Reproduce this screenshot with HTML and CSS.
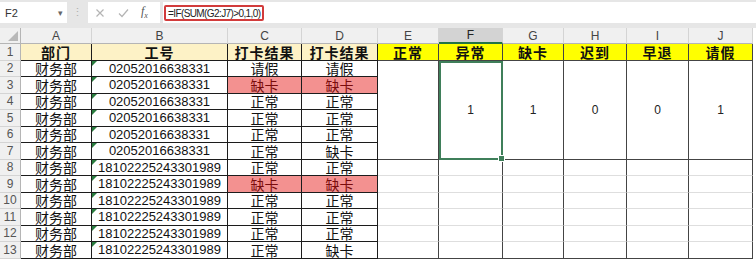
FILE: index.html
```html
<!DOCTYPE html>
<html>
<head>
  <meta charset="UTF-8">
  <title>考勤统计</title>
  <link rel="stylesheet" href="styles.css">
</head>
<body>
  <div class="toolbar">
    <div class="namebox">
      <span class="ref">F2</span>
      <span class="drop">&#9662;</span>
    </div>
    <div class="grip">&#8942;</div>
    <div class="fnbox">
      <svg class="ico ico-x" width="10" height="10" viewBox="0 0 10 10">
        <path d="M1.5 1.5 L8.5 8.5 M8.5 1.5 L1.5 8.5" stroke="#b4b4b4" stroke-width="1.2" fill="none"/>
      </svg>
      <svg class="ico ico-ok" width="11" height="10" viewBox="0 0 11 10">
        <path d="M1 5.5 L4 8.5 L10 1.5" stroke="#b4b4b4" stroke-width="1.2" fill="none"/>
      </svg>
      <span class="fx">f<sub>x</sub></span>
    </div>
    <div class="formula">
      <span class="formula-text">=IF(SUM(G2:J7)&gt;0,1,0)</span>
    </div>
  </div>

  <div class="sheet">
    <!-- column headers -->
    <div class="c corner"></div>
    <div class="c ch">A</div>
    <div class="c ch">B</div>
    <div class="c ch">C</div>
    <div class="c ch">D</div>
    <div class="c ch">E</div>
    <div class="c ch sel-col">F</div>
    <div class="c ch">G</div>
    <div class="c ch">H</div>
    <div class="c ch">I</div>
    <div class="c ch">J</div>

    <!-- row 1 -->
    <div class="c rh">1</div>
    <div class="c d t1">部门</div>
    <div class="c d t1">工号</div>
    <div class="c d t1">打卡结果</div>
    <div class="c d t1">打卡结果</div>
    <div class="c t2">正常</div>
    <div class="c t2">异常</div>
    <div class="c t2">缺卡</div>
    <div class="c t2">迟到</div>
    <div class="c t2">早退</div>
    <div class="c t2">请假</div>

    <!-- row 2 -->
    <div class="c rh">2</div>
    <div class="c d">财务部</div>
    <div class="c d num">02052016638331</div>
    <div class="c d">请假</div>
    <div class="c d">请假</div>
    <div class="c m"></div>
    <div class="c m sel">1</div>
    <div class="c m">1</div>
    <div class="c m">0</div>
    <div class="c m">0</div>
    <div class="c m">1</div>

    <!-- rows 3-7 -->
    <div class="c rh">3</div>
    <div class="c d">财务部</div>
    <div class="c d num">02052016638331</div>
    <div class="c d bad">缺卡</div>
    <div class="c d bad">缺卡</div>

    <div class="c rh">4</div>
    <div class="c d">财务部</div>
    <div class="c d num">02052016638331</div>
    <div class="c d">正常</div>
    <div class="c d">正常</div>

    <div class="c rh">5</div>
    <div class="c d">财务部</div>
    <div class="c d num">02052016638331</div>
    <div class="c d">正常</div>
    <div class="c d">正常</div>

    <div class="c rh">6</div>
    <div class="c d">财务部</div>
    <div class="c d num">02052016638331</div>
    <div class="c d">正常</div>
    <div class="c d">正常</div>

    <div class="c rh">7</div>
    <div class="c d">财务部</div>
    <div class="c d num">02052016638331</div>
    <div class="c d">正常</div>
    <div class="c d">缺卡</div>

    <!-- rows 8-13 -->
    <div class="c rh">8</div>
    <div class="c d">财务部</div>
    <div class="c d num">18102225243301989</div>
    <div class="c d">正常</div>
    <div class="c d">正常</div>
    <div class="c e"></div><div class="c e"></div><div class="c e"></div>
    <div class="c e"></div><div class="c e"></div><div class="c e"></div>

    <div class="c rh">9</div>
    <div class="c d">财务部</div>
    <div class="c d num">18102225243301989</div>
    <div class="c d bad">缺卡</div>
    <div class="c d bad">缺卡</div>
    <div class="c e"></div><div class="c e"></div><div class="c e"></div>
    <div class="c e"></div><div class="c e"></div><div class="c e"></div>

    <div class="c rh">10</div>
    <div class="c d">财务部</div>
    <div class="c d num">18102225243301989</div>
    <div class="c d">正常</div>
    <div class="c d">正常</div>
    <div class="c e"></div><div class="c e"></div><div class="c e"></div>
    <div class="c e"></div><div class="c e"></div><div class="c e"></div>

    <div class="c rh">11</div>
    <div class="c d">财务部</div>
    <div class="c d num">18102225243301989</div>
    <div class="c d">正常</div>
    <div class="c d">正常</div>
    <div class="c e"></div><div class="c e"></div><div class="c e"></div>
    <div class="c e"></div><div class="c e"></div><div class="c e"></div>

    <div class="c rh">12</div>
    <div class="c d">财务部</div>
    <div class="c d num">18102225243301989</div>
    <div class="c d">正常</div>
    <div class="c d">正常</div>
    <div class="c e"></div><div class="c e"></div><div class="c e"></div>
    <div class="c e"></div><div class="c e"></div><div class="c e"></div>

    <div class="c rh">13</div>
    <div class="c d">财务部</div>
    <div class="c d num">18102225243301989</div>
    <div class="c d">正常</div>
    <div class="c d">缺卡</div>
    <div class="c e last"></div><div class="c e last"></div><div class="c e last"></div>
    <div class="c e last"></div><div class="c e last"></div><div class="c e last"></div>
  </div>
</body>
</html>
```

FILE: styles.css
```css
body {
  margin: 0;
  background-color: #fff;
  font-family: "Liberation Sans", Arial, sans-serif;
}

/* formula bar */

.toolbar {
  display: flex;
  height: 28px;
  padding-top: 2px;
  box-sizing: border-box;
  background-color: #e6e6e6;
}

.namebox,
.fnbox,
.formula {
  height: 21px;
  background-color: #fff;
  display: flex;
  align-items: center;
}

.namebox {
  width: 67px;
  justify-content: space-between;
  padding: 0 4px 0 5px;
  box-sizing: border-box;
}

.ref {
  font-size: 11px;
  color: #333;
}

.drop {
  font-size: 9px;
  color: #666;
}

.grip {
  width: 21px;
  text-align: center;
  line-height: 21px;
  font-size: 11px;
  color: #b0b0b0;
}

.fnbox {
  width: 72px;
}

.ico-x {
  margin-left: 7px;
}

.ico-ok {
  margin-left: 13px;
}

.fx {
  margin-left: 12px;
  font-family: "Liberation Serif", serif;
  font-style: italic;
  font-size: 12px;
  color: #555;
}

.fx sub {
  font-size: 8px;
}

.formula {
  flex: 1;
  margin-left: 3px;
}

.formula-text {
  margin-left: 1px;
  height: 16px;
  line-height: 13px;
  padding: 0 2px;
  box-sizing: border-box;
  border: 2px solid #d23b3b;
  border-radius: 2px;
  font-size: 10px;
  letter-spacing: -0.6px;
  color: #222;
}

/* sheet grid */

.sheet {
  display: grid;
  grid-template-columns: 21px 71px 136px 74px 76px 61px 64px 61px 63px 62px 64px;
  grid-template-rows: 16px repeat(13, 16.5px);
}

.c {
  box-sizing: border-box;
  display: flex;
  align-items: center;
  justify-content: center;
  border-right: 1px solid #444;
  border-bottom: 1px solid #444;
  white-space: nowrap;
  line-height: 1;
  font-family: "Noto Sans CJK SC", sans-serif;
  font-size: 14px;
  color: #111;
  position: relative;
}

.corner {
  background-color: #f0f0f0;
  border-right-color: #b5b5b5;
  border-bottom-color: #b5b5b5;
}

.corner::after {
  content: "";
  position: absolute;
  right: 2px;
  bottom: 2px;
  border-left: 10px solid transparent;
  border-bottom: 10px solid #b8b8b8;
}

.ch {
  background-color: #f0f0f0;
  border-right-color: #d4d4d4;
  border-bottom-color: #b5b5b5;
  font-family: "Liberation Sans", Arial, sans-serif;
  font-size: 12px;
  color: #444;
}

.sel-col {
  background-color: #d3d3d3;
  border-bottom: 2px solid #217346;
  color: #222;
}

.rh {
  background-color: #f0f0f0;
  border-right-color: #b5b5b5;
  border-bottom-color: #d4d4d4;
  font-family: "Liberation Sans", Arial, sans-serif;
  font-size: 12px;
  color: #555;
}

.d {
  border-right-color: #1c1c1c;
  border-bottom-color: #1c1c1c;
}

.t1 {
  background-color: #fdf2c6;
  font-weight: bold;
  letter-spacing: 1px;
}

.t2 {
  background-color: #ffff00;
  font-weight: bold;
  letter-spacing: 1px;
}

.num {
  font-family: "Liberation Sans", Arial, sans-serif;
  font-size: 13px;
}

.num::before {
  content: "";
  position: absolute;
  left: 0;
  top: 0;
  border-top: 5px solid #2a7d3f;
  border-right: 5px solid transparent;
}

.bad {
  background-color: #f39190;
  color: #7a0c0c;
}

.m {
  grid-row: span 6;
  font-family: "Liberation Sans", Arial, sans-serif;
  font-size: 12px;
  color: #222;
}

.sel {
  outline: 2px solid #3f7f5a;
  outline-offset: -2px;
}

.sel::after {
  content: "";
  position: absolute;
  right: -3px;
  bottom: -3px;
  width: 5px;
  height: 5px;
  background-color: #3f7f5a;
  border: 1px solid #fff;
  z-index: 2;
}

.e {
  border-bottom-color: #dedede;
}

.e.last {
  border-bottom-color: #444;
}
```
